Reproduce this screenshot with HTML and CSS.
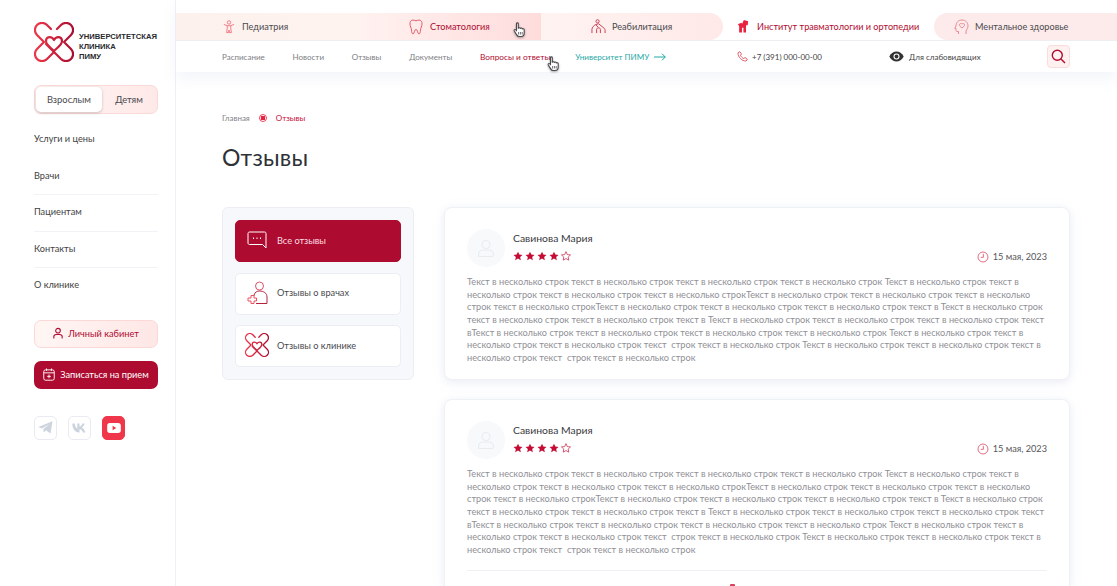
FILE: index.html
```html
<!DOCTYPE html>
<html lang="ru">
<head>
    <meta charset="UTF-8">
    <meta name="viewport" content="width=device-width, initial-scale=1.0">
    <title>Отзывы</title>
    <link rel="stylesheet" href="styles.css">
</head>
<body>
    <svg class="defs" width="0" height="0">
        <defs>
            <linearGradient id="logoGrad" gradientUnits="userSpaceOnUse" x1="0" y1="0" x2="40" y2="0">
                <stop offset="0" stop-color="#f0384a"/>
                <stop offset="1" stop-color="#a90c30"/>
            </linearGradient>
            <symbol id="logoMark" viewBox="0 0 40 40">
                <g fill="none" stroke="url(#logoGrad)" stroke-width="2.200" stroke-linecap="round" stroke-linejoin="round">
                    <path d="M17 7 13 3A7 7 0 0 0 3 13L10 20 3 27A7 7 0 0 0 13 37L20 30"/>
                    <path d="M23 7 27 3A7 7 0 0 1 37 13L30 20 37 27A7 7 0 0 1 27 37L12 22"/>
                    <path d="M20 18C18 14 12 14 12 19C12 23 17 26 20 29C23 26 28 23 28 19C28 14 22 14 20 18Z"/>
                </g>
            </symbol>
            <symbol id="star" viewBox="0 0 12 12">
                <path d="M6 .8 7.600 4.300 11.400 4.700 8.600 7.300 9.400 11 6 9.100 2.600 11 3.400 7.300.6 4.700 4.400 4.300Z"/>
            </symbol>
            <symbol id="clock" viewBox="0 0 14 14">
                <circle cx="7" cy="7" r="5.800" fill="none" stroke="#df5468" stroke-width="1"/>
                <path d="M7.400 3.400V7.400H4.400" fill="none" stroke="#df5468" stroke-width="1"/>
            </symbol>
            <symbol id="person" viewBox="0 0 20 20">
                <circle cx="10" cy="6.500" r="4" fill="none" stroke="#e9ebef" stroke-width="1.200"/>
                <path d="M2.500 17C2.500 13.500 5 12 7 12H13C15 12 17.500 13.500 17.500 17C17.500 18 16.800 18.500 16 18.500H4C3.200 18.500 2.500 18 2.500 17Z" fill="none" stroke="#e9ebef" stroke-width="1.200"/>
            </symbol>
            <symbol id="hand" viewBox="0 0 14 16">
                <path d="M3.500 1.800C3.500 .6 5.300 .6 5.300 1.800V6.300C5.500 5.500 7.200 5.500 7.300 6.500 7.600 5.800 9.200 5.900 9.300 7 9.700 6.400 11.200 6.600 11.200 7.800V11C11.200 13 10 14.500 8 14.500H6.500C5 14.500 4.200 13.800 3.500 12.600L1.200 8.800C.7 7.800 2 7 2.800 7.800L3.500 8.800Z" fill="#fff" stroke="#4a4a4e" stroke-width="1.100" stroke-linejoin="round"/>
                <path d="M5.600 10V12.500M7.400 10V12.500M9.200 10V12.500" stroke="#4a4a4e" stroke-width=".8"/>
            </symbol>
        </defs>
    </svg>

    <div class="page">
        <aside class="sidebar">
            <a class="logo" href="#">
                <svg class="logo-mark" width="40" height="40"><use href="#logoMark"/></svg>
                <span class="logo-text">УНИВЕРСИТЕТСКАЯ<br>КЛИНИКА<br>ПИМУ</span>
            </a>

            <div class="switch">
                <span class="switch-item active">Взрослым</span>
                <span class="switch-item">Детям</span>
            </div>

            <nav class="side-nav">
                <a href="#">Услуги и цены</a>
                <a href="#">Врачи</a>
                <a href="#">Пациентам</a>
                <a href="#">Контакты</a>
                <a href="#">О клинике</a>
            </nav>

            <a class="btn btn-light" href="#">
                <svg width="10" height="13" viewBox="0 0 12 14" fill="none" stroke="#b00b30" stroke-width="1.300">
                    <circle cx="6" cy="3.600" r="2.800"/>
                    <path d="M1 13V11C1 9 2.500 8.200 4 8.200H8C9.500 8.200 11 9 11 11V13"/>
                </svg>
                Личный кабинет
            </a>
            <a class="btn btn-dark" href="#">
                <svg width="12" height="13" viewBox="0 0 13 14" fill="none" stroke="#fff" stroke-width="1">
                    <rect x=".8" y="2" width="11.400" height="11.200" rx="2"/>
                    <path d="M.8 5.200H12.200M3.800 .5V3M9.200 .5V3M6.500 7V11M4.500 9H8.500"/>
                </svg>
                Записаться на прием
            </a>

            <div class="socials">
                <a class="social" href="#">
                    <svg width="15" height="13" viewBox="0 0 15 13"><path d="M.3 6 14.500.3 12.500 12.500 8 9.300 5.800 11.500 5.300 8 11.500 3 3.800 7.400Z" fill="#cdd4de"/></svg>
                </a>
                <a class="social" href="#">
                    <svg width="15" height="10" viewBox="0 0 15 10"><path d="M.3.5H2.800C3 3 4 5 5.300 5.500V.5H7.500V3.500C8.800 3.300 10 1.800 10.500.5H12.700C12.300 2.300 11 3.700 10 4.500 11.200 5.200 12.700 6.800 13.500 9.500H11C10.500 7.800 9.200 6.500 7.500 6.300V9.500H7C3 9.500.5 6 .3.500Z" fill="#cdd4de"/></svg>
                </a>
                <a class="social social-yt" href="#">
                    <svg width="14" height="10" viewBox="0 0 15 11"><rect width="15" height="11" rx="3" fill="#fff"/><path d="M6 3 10 5.500 6 8Z" fill="#f0364a"/></svg>
                </a>
            </div>
        </aside>

        <div class="main">
            <header class="header">
                <div class="tabs">
                    <a class="tab tab-ped" href="#">
                        <svg width="12" height="16" viewBox="0 0 14 16" fill="none" stroke="#ef6b78" stroke-width="1">
                            <circle cx="7" cy="2.700" r="2"/>
                            <path d="M1 5 5 6.500H9L13 5M5 6.500V9L4.200 14.500H6.500L7 11.500 7.500 14.500H9.800L9 9V6.500"/>
                        </svg>
                        Педиатрия
                    </a>
                    <a class="tab tab-dent" href="#">
                        <svg width="14" height="16" viewBox="0 0 14 16" fill="none" stroke="#e85a6a" stroke-width="1">
                            <path d="M4 1C2 1 1 2.800 1 5C1 7.500 2.300 8.500 2.500 11C2.700 13 3 15 4 15C5.500 15 5 10.500 7 10.500C9 10.500 8.500 15 10 15C11 15 11.300 13 11.500 11C11.700 8.500 13 7.500 13 5C13 2.800 12 1 10 1C8.800 1 8 1.800 7 1.800C6 1.800 5.200 1 4 1Z"/>
                        </svg>
                        Стоматология
                    </a>
                    <a class="tab tab-reab" href="#">
                        <svg width="15" height="15" viewBox="0 0 16 16" fill="none" stroke="#c9384f" stroke-width="1">
                            <circle cx="7" cy="2.500" r="1.700"/>
                            <path d="M1 15V11C1 9 3 7 5 6L8 5 13 9C14.500 10 15 11 15 12V15M6 15V11C6 10 7 9.500 8 9.500S10 10 10 11V15M5 6 8 9"/>
                        </svg>
                        Реабилитация
                    </a>
                    <a class="tab tab-inst" href="#">
                        <svg width="12" height="15" viewBox="0 0 14 16">
                            <path d="M8 .5 13 2 12.500 6.500H10.500V15H7.500V9.500H5.800V15H2.500V7.500L1 5.500 5 3.500 6 4.800Z" fill="#e8233f"/>
                        </svg>
                        Институт травматологии и ортопедии
                    </a>
                    <a class="tab tab-ment" href="#">
                        <svg width="15" height="16" viewBox="0 0 15 16" fill="none" stroke="#e88a94" stroke-width="1">
                            <path d="M4.500 15V12.500H3C2 12.500 2 11.500 2 10.800V9.500H.8L2 7C2 3.500 4.500 1 8 1C11.500 1 14 3.500 14 7C14 9.500 12.500 10.500 12 12V15"/>
                            <path d="M8 9C6.500 7.800 5.500 7 5.500 5.800C5.500 4.400 7.300 4 8 5.200C8.700 4 10.500 4.400 10.500 5.800C10.500 7 9.500 7.800 8 9Z"/>
                        </svg>
                        Ментальное здоровье
                    </a>
                </div>
                <div class="subnav">
                    <nav class="subnav-links">
                        <a href="#">Расписание</a>
                        <a href="#">Новости</a>
                        <a href="#">Отзывы</a>
                        <a href="#">Документы</a>
                        <a class="current" href="#">Вопросы и ответы</a>
                        <a class="uni" href="#">Университет ПИМУ
                            <svg width="12" height="8" viewBox="0 0 12 8" fill="none" stroke="#1fa9a6" stroke-width="1"><path d="M0 4H11.300M8 .7 11.300 4 8 7.300"/></svg>
                        </a>
                    </nav>
                    <a class="phone" href="#">
                        <svg width="11" height="11" viewBox="0 0 11 11" fill="none" stroke="#e0616f" stroke-width="1"><path d="M1 1.800 2.800.7 4.500 3 3.400 4.200C3.800 5.500 5.500 7.200 6.800 7.600L8 6.500 10.300 8.200 9.200 10C5 10.300.7 6 1 1.800Z"/></svg>
                        +7 (391) 000-00-00
                    </a>
                    <a class="low-vision" href="#">
                        <svg width="15" height="11" viewBox="0 0 15 11"><path d="M.3 5.500C2 2 4.700.6 7.500.6S13 2 14.700 5.500C13 9 10.300 10.400 7.500 10.400S2 9 .3 5.500Z" fill="#333"/><circle cx="7.500" cy="5.500" r="3" fill="#fff"/><circle cx="7.500" cy="5.500" r="1.900" fill="#333"/></svg>
                        Для слабовидящих
                    </a>
                    <a class="search" href="#">
                        <svg width="15" height="15" viewBox="0 0 15 15" fill="none" stroke="#b00b30" stroke-width="1.400"><circle cx="6.300" cy="6.300" r="5"/><path d="M10 10 14 14"/></svg>
                    </a>
                </div>
            </header>

            <main class="content">
                <div class="breadcrumbs">
                    <a href="#">Главная</a>
                    <span class="crumb-dot"></span>
                    <a class="crumb-current" href="#">Отзывы</a>
                </div>
                <h1>Отзывы</h1>

                <div class="columns">
                    <div class="filter">
                        <a class="filter-item active" href="#">
                            <span class="filter-icon">
                                <svg width="20" height="18" viewBox="0 0 20 18" fill="none" stroke="#fff" stroke-width="1"><path d="M2.500 1H17.500C18.500 1 19 1.700 19 2.500V17L15.500 13.500H2.500C1.500 13.500 1 12.800 1 12V2.500C1 1.700 1.500 1 2.500 1Z"/><path d="M6 7.200H7M9.500 7.200H10.500M13 7.200H14" stroke-width="1.400"/></svg>
                            </span>
                            Все отзывы
                        </a>
                        <a class="filter-item" href="#">
                            <span class="filter-icon">
                                <svg width="21" height="24" viewBox="0 0 21 24" fill="none" stroke-width="1">
                                    <circle cx="12.500" cy="5" r="4" stroke="#d9536a"/>
                                    <path d="M7 15V14C8 11 10 10 12.500 10C16.500 10 20 12 20 16V22.500H9" stroke="#b5213f"/>
                                    <path d="M4 14.500H7V17H9.500V20H7V22.500H4V20H1V17H4Z" stroke="#ef5060"/>
                                </svg>
                            </span>
                            Отзывы о врачах
                        </a>
                        <a class="filter-item" href="#">
                            <span class="filter-icon">
                                <svg width="24" height="24"><use href="#logoMark"/></svg>
                            </span>
                            Отзывы о клинике
                        </a>
                    </div>

                    <div class="reviews">
                        <article class="review">
                            <div class="review-head">
                                <div class="avatar"><svg width="20" height="20"><use href="#person"/></svg></div>
                                <div class="review-author">
                                    <div class="review-name">Савинова Мария</div>
                                    <div class="stars">
                                        <svg class="star"><use href="#star"/></svg>
                                        <svg class="star"><use href="#star"/></svg>
                                        <svg class="star"><use href="#star"/></svg>
                                        <svg class="star"><use href="#star"/></svg>
                                        <svg class="star star-empty"><use href="#star"/></svg>
                                    </div>
                                </div>
                                <div class="review-date"><svg width="12" height="12"><use href="#clock"/></svg>15 мая, 2023</div>
                            </div>
                            <p class="review-text">Текст в несколько строк текст в несколько строк текст в несколько строк текст в несколько строк Текст в несколько строк текст в несколько строк текст в несколько строк текст в несколько строкТекст в несколько строк текст в несколько строк текст в несколько строк текст в несколько строкТекст в несколько строк текст в несколько строк текст в несколько строк текст в Текст в несколько строк текст в несколько строк текст в несколько строк текст в Текст в несколько строк текст в несколько строк текст в несколько строк текст вТекст в несколько строк текст в несколько строк текст в несколько строк текст в несколько строк Текст в несколько строк текст в несколько строк текст в несколько строк текст &nbsp;строк текст в несколько строк Текст в несколько строк текст в несколько строк текст в несколько строк текст &nbsp;строк текст в несколько строк</p>
                        </article>

                        <article class="review review-cut">
                            <div class="review-head">
                                <div class="avatar"><svg width="20" height="20"><use href="#person"/></svg></div>
                                <div class="review-author">
                                    <div class="review-name">Савинова Мария</div>
                                    <div class="stars">
                                        <svg class="star"><use href="#star"/></svg>
                                        <svg class="star"><use href="#star"/></svg>
                                        <svg class="star"><use href="#star"/></svg>
                                        <svg class="star"><use href="#star"/></svg>
                                        <svg class="star star-empty"><use href="#star"/></svg>
                                    </div>
                                </div>
                                <div class="review-date"><svg width="12" height="12"><use href="#clock"/></svg>15 мая, 2023</div>
                            </div>
                            <p class="review-text">Текст в несколько строк текст в несколько строк текст в несколько строк текст в несколько строк Текст в несколько строк текст в несколько строк текст в несколько строк текст в несколько строкТекст в несколько строк текст в несколько строк текст в несколько строк текст в несколько строкТекст в несколько строк текст в несколько строк текст в несколько строк текст в Текст в несколько строк текст в несколько строк текст в несколько строк текст в Текст в несколько строк текст в несколько строк текст в несколько строк текст вТекст в несколько строк текст в несколько строк текст в несколько строк текст в несколько строк Текст в несколько строк текст в несколько строк текст в несколько строк текст &nbsp;строк текст в несколько строк Текст в несколько строк текст в несколько строк текст в несколько строк текст &nbsp;строк текст в несколько строк</p>
                            <div class="review-foot"><span class="foot-mark"></span></div>
                        </article>
                    </div>
                </div>
            </main>
        </div>
    </div>

    <svg class="cursor cursor-tab" width="14" height="16"><use href="#hand"/></svg>
    <svg class="cursor cursor-link" width="14" height="16"><use href="#hand"/></svg>
</body>
</html>
```

FILE: styles.css
```css
* {
    box-sizing: border-box;
}
html, body {
    height: 586px;
    overflow: hidden;
}
body {
    margin: 0;
    font-family: Lato, "Noto Sans", sans-serif;
    color: #333;
    background: #fff;
    position: relative;
}
a {
    color: inherit;
    text-decoration: none;
}
.defs {
    position: absolute;
}
.page {
    display: flex;
    height: 586px;
    overflow: hidden;
}

/* sidebar */
.sidebar {
    width: 176px;
    flex: none;
    padding: 22px 17px 0 34px;
    border-right: 1px solid #eef0f5;
}
.logo {
    display: flex;
    align-items: center;
    gap: 5px;
    height: 40px;
}
.logo-mark {
    flex: none;
}
.logo-text {
    padding-top: 10px;
    font-family: "Liberation Sans", sans-serif;
    font-size: 7.650px;
    line-height: 10px;
    font-weight: 700;
    color: #2a2a2e;
}
.switch {
    display: flex;
    height: 29px;
    margin-top: 23px;
    padding: 1px;
    border: 1px solid #fbd9d8;
    border-radius: 7px;
    background: linear-gradient(90deg, #fff5f3, #fee9e8);
}
.switch-item {
    flex: 1;
    font-size: 9.400px;
    line-height: 25px;
    text-align: center;
    color: #4a4a4e;
}
.switch-item.active {
    flex: none;
    width: 66px;
    background: #fff;
    border-radius: 5px;
    box-shadow: 0 1px 3px rgba(60, 30, 30, .25);
}
.side-nav {
    margin-top: 8px;
}
.side-nav a {
    display: block;
    height: 36.600px;
    font-size: 9.200px;
    line-height: 34px;
    color: #3f3f43;
    border-bottom: 1px solid #f1f2f5;
}
.side-nav a:first-child, .side-nav a:last-child {
    border-bottom: none;
}
.btn {
    display: flex;
    align-items: center;
    justify-content: center;
    gap: 5px;
    height: 28px;
    font-size: 9.200px;
    border-radius: 7px;
}
.btn-light {
    margin-top: 15px;
    color: #b00b30;
    border: 1px solid #fcd8d6;
    background: linear-gradient(90deg, #fff6f4, #fee7e6);
}
.btn-dark {
    margin-top: 13px;
    color: #fff;
    background: #ad0b2f;
}
.socials {
    display: flex;
    gap: 11px;
    margin-top: 27px;
}
.social {
    display: flex;
    align-items: center;
    justify-content: center;
    width: 23px;
    height: 24px;
    border: 1px solid #e8ebf1;
    border-radius: 5px;
}
.social-yt {
    background: #f0364a;
    border-color: #f0364a;
}

/* header */
.main {
    flex: 1;
    min-width: 0;
}
.header {
    padding-top: 13px;
    height: 72px;
    box-shadow: 0 6px 14px rgba(226, 230, 242, .45);
}
.tabs {
    display: flex;
    height: 28px;
    font-size: 9.150px;
    color: #4a4a4e;
    border-bottom: 1px solid #eceef2;
}
.tab {
    display: flex;
    align-items: center;
    white-space: nowrap;
}
.tab-ped {
    width: 181px;
    padding-left: 47px;
    gap: 7px;
    background: linear-gradient(90deg, #fdf1ed, #fff3f0);
}
.tab-dent {
    width: 184px;
    padding-left: 52px;
    gap: 7px;
    color: #b00b30;
    background: linear-gradient(90deg, #fff2f0, #fedcdc);
}
.tab-reab {
    width: 182px;
    padding-left: 50px;
    gap: 6px;
    background: linear-gradient(90deg, #fff3f1, #fee9e8);
    border-radius: 0 14px 14px 0;
}
.tab-inst {
    width: 211px;
    padding-left: 14px;
    gap: 8px;
    color: #b00b30;
    background: #fff;
}
.tab-ment {
    flex: 1;
    padding-left: 20px;
    gap: 6px;
    background: #fdeaea;
    border-radius: 14px 0 0 14px;
}
.subnav {
    display: flex;
    align-items: center;
    height: 31px;
    padding-left: 46px;
    font-size: 8px;
}
.subnav-links {
    display: flex;
    gap: 27.800px;
    color: #7e7e84;
    width: 515px;
}
.subnav-links .current {
    font-size: 8.300px;
    color: #b00b30;
}
.subnav-links .uni {
    display: flex;
    align-items: center;
    gap: 5px;
    margin-left: -3px;
    font-size: 8.100px;
    color: #1fa9a6;
}
.phone {
    display: flex;
    align-items: center;
    gap: 4px;
    width: 152px;
    color: #444;
}
.low-vision {
    display: flex;
    align-items: center;
    gap: 5px;
    width: 158px;
    color: #444;
}
.search {
    display: flex;
    align-items: center;
    justify-content: center;
    width: 23px;
    height: 23px;
    border: 1px solid #fbdcda;
    border-radius: 4px;
    background: #fff1ef;
}

/* content */
.content {
    padding: 41px 47px 0 46px;
}
.breadcrumbs {
    display: flex;
    align-items: center;
    height: 10px;
    font-size: 8px;
    color: #85858b;
}
.crumb-dot {
    width: 8px;
    height: 8px;
    margin: 0 9px 0 9px;
    border: 1px solid #e8435a;
    border-radius: 50%;
    background: radial-gradient(circle, #e8233f 0 2.200px, #fff 2.400px);
}
.crumb-current {
    color: #c9103c;
}
h1 {
    margin: 19px 0 0;
    font-size: 23px;
    line-height: 30px;
    font-weight: 400;
    letter-spacing: .2px;
    color: #2e3136;
}
.columns {
    display: flex;
    align-items: flex-start;
    gap: 30px;
    margin-top: 35px;
}
.filter {
    flex: none;
    display: flex;
    flex-direction: column;
    gap: 10.500px;
    width: 192px;
    padding: 12px;
    background: #f7f8fb;
    border: 1px solid #eceef3;
    border-radius: 6px;
}
.filter-item {
    display: flex;
    align-items: center;
    height: 42px;
    padding: 0 0 2px 9px;
    font-size: 9.200px;
    color: #4a4a4e;
    background: #fff;
    border: 1px solid #eceef3;
    border-radius: 5px;
}
.filter-icon {
    flex: none;
    display: flex;
    justify-content: center;
    width: 24px;
    margin-right: 8px;
}
.filter-item.active {
    color: #fbdde2;
    background: #ad0b2f;
    border-color: #ad0b2f;
}
.reviews {
    flex: 1;
    min-width: 0;
    display: flex;
    flex-direction: column;
    gap: 19.500px;
}
.review {
    padding: 21px 22px 14px 22px;
    background: #fff;
    border: 1px solid #f0f1f6;
    border-radius: 8px;
    box-shadow: 0 2px 10px rgba(214, 218, 235, .55);
}
.review-cut {
    padding-bottom: 0;
    border-bottom: none;
    border-radius: 8px 8px 0 0;
}
.review-head {
    display: flex;
    align-items: flex-start;
}
.avatar {
    flex: none;
    display: flex;
    align-items: center;
    justify-content: center;
    width: 38px;
    height: 38px;
    border-radius: 50%;
    background: #f8f9fb;
}
.review-author {
    margin: 2px 0 0 8px;
}
.review-name {
    font-size: 10.400px;
    line-height: 14px;
    color: #3a3a3e;
}
.stars {
    display: flex;
    gap: 2px;
    margin-top: 6px;
}
.star {
    width: 10px;
    height: 10px;
    fill: #c40c35;
}
.star-empty {
    fill: #fff;
    stroke: #c40c35;
    stroke-width: .8;
}
.review-date {
    display: flex;
    align-items: center;
    gap: 4px;
    margin-left: auto;
    margin-top: 22px;
    font-size: 9.200px;
    line-height: 12px;
    color: #55555a;
}
.review-text {
    margin: 9px 0 0;
    font-size: 9.180px;
    line-height: 12.650px;
    color: #909096;
}
.review-foot {
    margin-top: 13px;
    height: 16px;
    padding: 13px 0 0 263px;
    border-top: 1px solid #f0f1f4;
}
.foot-mark {
    display: block;
    width: 5px;
    height: 2px;
    background: #d8435a;
    border-radius: 1px 1px 0 0;
}

/* cursors from the screen recording */
.cursor {
    position: absolute;
    filter: drop-shadow(0 1px 1px rgba(0, 0, 0, .35));
}
.cursor-tab {
    left: 513px;
    top: 22px;
}
.cursor-link {
    left: 547px;
    top: 56px;
}
```
